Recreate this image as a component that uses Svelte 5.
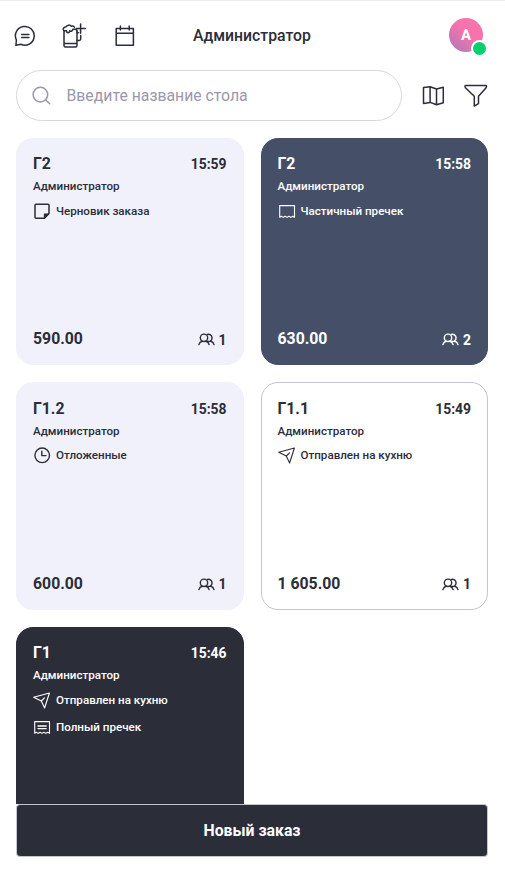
<script>
	let search = $state('');

	const orders = [
		{ table: 'Г2', time: '15:59', waiter: 'Администратор', tags: [['note', 'Черновик заказа']], total: '590.00', guests: 1, theme: 'light' },
		{ table: 'Г2', time: '15:58', waiter: 'Администратор', tags: [['receipt', 'Частичный пречек']], total: '630.00', guests: 2, theme: 'slate' },
		{ table: 'Г1.2', time: '15:58', waiter: 'Администратор', tags: [['clock', 'Отложенные']], total: '600.00', guests: 1, theme: 'light' },
		{ table: 'Г1.1', time: '15:49', waiter: 'Администратор', tags: [['send', 'Отправлен на кухню']], total: '1 605.00', guests: 1, theme: 'outline' },
		{ table: 'Г1', time: '15:46', waiter: 'Администратор', tags: [['send', 'Отправлен на кухню'], ['full', 'Полный пречек']], total: '', guests: 0, theme: 'dark' }
	];

	let visible = $derived(orders.filter((o) => o.table.toLowerCase().includes(search.toLowerCase())));
</script>

{#snippet tagIcon(name)}
	<svg class="tag-icon" viewBox="0 0 18 18">
		{#if name === 'note'}
			<path stroke-width="1.5" d="M3 2.3h12a1 1 0 0 1 1 1v8l-4.6 4.9H3a1 1 0 0 1-1-1V3.3a1 1 0 0 1 1-1z" />
			<path fill="currentColor" d="M11.4 16v-4h4.4z" />
		{:else if name === 'receipt'}
			<path d="M1.7 15.2V3.6h14.8v11.6l-1.7-1-1.9 1.2-2-1.2-1.9 1.2-1.9-1.2-2 1.2-1.8-1.2z" />
		{:else if name === 'full'}
			<path d="M1.7 15.2V3.6h14.8v11.6l-1.7-1-1.9 1.2-2-1.2-1.9 1.2-1.9-1.2-2 1.2-1.8-1.2z" />
			<path stroke-width="1.3" d="M5 8h8.2M5 10.6h8.2" />
		{:else if name === 'clock'}
			<circle cx="9.2" cy="9.3" r="7.3" stroke-width="1.4" />
			<path stroke-width="1.4" d="M8.8 5.3v4.3h4.2" />
		{:else}
			<path d="M.7 6.2 16.4 2 11.6 17 8.3 10z" />
			<path d="m8.3 10 3.2-3.2" />
		{/if}
	</svg>
{/snippet}

<div class="app">
	<header>
		<div class="tools">
			<button aria-label="Сообщения">
				<svg width="22" height="22" viewBox="0 0 22 22">
					<path d="M1.9 20.3 2.4 15A9.4 9.4 0 1 1 6.8 19.3z" />
					<path d="M7.7 9.4h7.2M7.7 12.4h7.2" />
				</svg>
			</button>
			<button aria-label="Бар">
				<svg width="24" height="26" viewBox="0 0 24 26">
					<path d="M2 8v14.5A1.5 1.5 0 0 0 3.5 24h10a1.5 1.5 0 0 0 1.5-1.5V8M2 20.6h13" />
					<path d="M2 7.8C.6 6.6 1.4 3.8 3.8 4 5 1.8 8.2 1.5 9.4 3.3c1.4-.5 2.6 0 3 1M2 7.8h2.5c.3 2.6 2.8 2.6 3.2 0 1.5.9 2.8.2 3.2-1.6h2.3c1.2 0 1.8.8 1.8 2" />
					<path d="M15 17.5h2.3a1.4 1.4 0 0 0 1.4-1.4v-3.5M15 9.8h1.5M18.6 1v9.2M14.4 5.6h8.8" />
				</svg>
			</button>
			<button aria-label="Календарь">
				<svg width="20" height="22" viewBox="0 0 20 22">
					<path d="M1.2 3.4h17.2v16.9H1.2zM1.2 8.2h17.2M5.4 1v4M14.2 1v4" />
				</svg>
			</button>
		</div>
		<h1>Администратор</h1>
		<div class="avatar">А<span class="status"></span></div>
	</header>

	<div class="search-row">
		<label class="search">
			<svg width="20" height="20" viewBox="0 0 20 20">
				<circle cx="8.4" cy="8.6" r="7.3" />
				<path d="m13.6 13.8 4 4" />
			</svg>
			<input type="text" bind:value={search} placeholder="Введите название стола" />
		</label>
		<button aria-label="Карта зала">
			<svg width="22" height="22" viewBox="0 0 22 22">
				<path d="m1.5 2.4 6.6-.6 6.4 2.2 6.8-1.8v15.6l-6.8 1.9-6.4-2.3-6.6 1zM8.1 1.8v15.6M14.5 4v15.7" />
			</svg>
		</button>
		<button aria-label="Фильтр">
			<svg width="24" height="24" viewBox="0 0 24 24">
				<path d="M1.5 1.5h20.4c.5 0 .8.5.6.9l-.4 1.3-7.6 8.6v7.3l-4.2 2.6v-9.9L1.4 3.7 1 2.4c-.1-.5.1-.9.5-.9z" />
			</svg>
		</button>
	</div>

	<main>
		{#each visible as order}
			<article class="card {order.theme}">
				<div class="top">
					<h2>{order.table}</h2>
					<time>{order.time}</time>
				</div>
				<p class="waiter">{order.waiter}</p>
				{#each order.tags as [icon, label]}
					<div class="tag">
						{@render tagIcon(icon)}
						<span>{label}</span>
					</div>
				{/each}
				{#if order.total}
					<div class="bottom">
						<strong>{order.total}</strong>
						<span class="guests">
							<svg width="17" height="13" viewBox="0 0 17 13">
								<circle cx="6" cy="4.8" r="3.7" />
								<path d="M.9 11.6c.5-1.8 1.6-2.9 3.3-3.3M7.8 8.3c1.7.4 2.9 1.5 3.3 3.3M9.3 1.5a3.6 3.6 0 1 1 .3 6.9M12.7 8.3c1.7.4 2.9 1.5 3.3 3.3" />
							</svg>
							{order.guests}
						</span>
					</div>
				{/if}
			</article>
		{/each}
	</main>

	<footer>
		<button class="new-order">Новый заказ</button>
	</footer>
</div>

<style>
	:global(body) {
		margin: 0;
		background: #fff;
	}

	.app {
		box-sizing: border-box;
		height: 873px;
		display: flex;
		flex-direction: column;
		overflow: hidden;
		border-top: 1px solid #ececee;
		font-family: Roboto, 'Open Sans', sans-serif;
		color: #2b2d38;
	}

	button {
		padding: 0;
		border: none;
		background: none;
		color: inherit;
		font-family: inherit;
		cursor: pointer;
	}

	svg {
		display: block;
		fill: none;
		stroke: currentColor;
		stroke-width: 1.5;
		stroke-linejoin: round;
		stroke-linecap: round;
	}

	header {
		flex: none;
		height: 69px;
		box-sizing: border-box;
		padding: 0 22px 0 13px;
		display: grid;
		grid-template-columns: 180px 1fr 34px;
		align-items: center;
	}

	.tools {
		display: flex;
		align-items: center;
		gap: 26px;
		padding-left: 1px;
	}

	.tools button:last-child {
		margin-left: 3px;
	}

	h1 {
		margin: 0;
		font-size: 15.8px;
		font-weight: 500;
		line-height: 20px;
	}

	.avatar {
		position: relative;
		width: 34px;
		height: 34px;
		margin-bottom: 1px;
		border-radius: 50%;
		background: linear-gradient(40deg, #ad7abb 5%, #f673ab 55%);
		color: #fff;
		font-size: 15px;
		font-weight: 700;
		line-height: 34px;
		text-align: center;
	}

	.status {
		position: absolute;
		right: -5px;
		bottom: -5px;
		width: 13px;
		height: 13px;
		border: 2px solid #fff;
		border-radius: 50%;
		background: #07cf6d;
	}

	.search-row {
		flex: none;
		display: flex;
		align-items: center;
		padding: 0 17px 0 16px;
	}

	.search-row > button {
		margin-left: 20px;
	}

	.search {
		flex: 1;
		height: 51px;
		box-sizing: border-box;
		display: flex;
		align-items: center;
		gap: 14.5px;
		padding: 0 15px;
		border: 1px solid #d8d8df;
		border-radius: 26px;
		color: #9a98aa;
	}

	.search input {
		flex: 1;
		min-width: 0;
		padding: 0;
		border: none;
		outline: none;
		background: none;
		font-family: inherit;
		font-size: 15.8px;
		color: #2b2d38;
	}

	.search input::placeholder {
		color: #9a98aa;
		opacity: 1;
	}

	main {
		flex: 1;
		min-height: 0;
		margin-top: 16.5px;
		padding: 0 17px 0 16px;
		display: grid;
		grid-template-columns: 1fr 1fr;
		grid-auto-rows: 227.5px;
		gap: 17px;
		overflow: hidden;
	}

	.card {
		box-sizing: border-box;
		display: flex;
		flex-direction: column;
		padding: 15.5px 16px 14px;
		border: 1px solid transparent;
		border-radius: 17px;
	}

	.light {
		background: #f1f1fb;
		border-color: #f1f1fb;
	}

	.slate {
		background: #455068;
		border-color: #455068;
		color: #fff;
	}

	.outline {
		background: #fff;
		border-color: #c3c3d6;
	}

	.dark {
		background: #2b2e39;
		border-color: #2b2e39;
		color: #fff;
	}

	.top,
	.bottom {
		display: flex;
		align-items: center;
		justify-content: space-between;
	}

	h2 {
		margin: 0;
		font-size: 15.8px;
		font-weight: 700;
		line-height: 20px;
	}

	time {
		font-size: 13.9px;
		font-weight: 700;
		line-height: 20px;
	}

	.waiter {
		margin: 4px 0 7.5px;
		font-size: 11.6px;
		font-weight: 500;
		line-height: 16px;
	}

	.tag {
		display: flex;
		align-items: center;
		gap: 5px;
		height: 18px;
		margin-bottom: 9.5px;
		font-size: 11.6px;
		font-weight: 500;
		line-height: 16px;
	}

	.tag-icon {
		width: 18px;
		height: 18px;
		stroke-width: 1.1;
	}

	.bottom {
		margin-top: auto;
	}

	.bottom strong {
		font-size: 15.8px;
		line-height: 22px;
	}

	.guests {
		display: flex;
		align-items: center;
		gap: 4px;
		padding-top: 1px;
		font-size: 13.9px;
		font-weight: 700;
	}

	.guests svg {
		stroke-width: 1.4;
	}

	footer {
		flex: none;
		padding: 0 17px 16px 16px;
	}

	.new-order {
		display: block;
		width: 100%;
		height: 53px;
		border: 1px solid #c3c6cd;
		border-radius: 4px;
		background: #2b2e39;
		color: #fff;
		font-size: 15.8px;
		font-weight: 700;
	}
</style>
